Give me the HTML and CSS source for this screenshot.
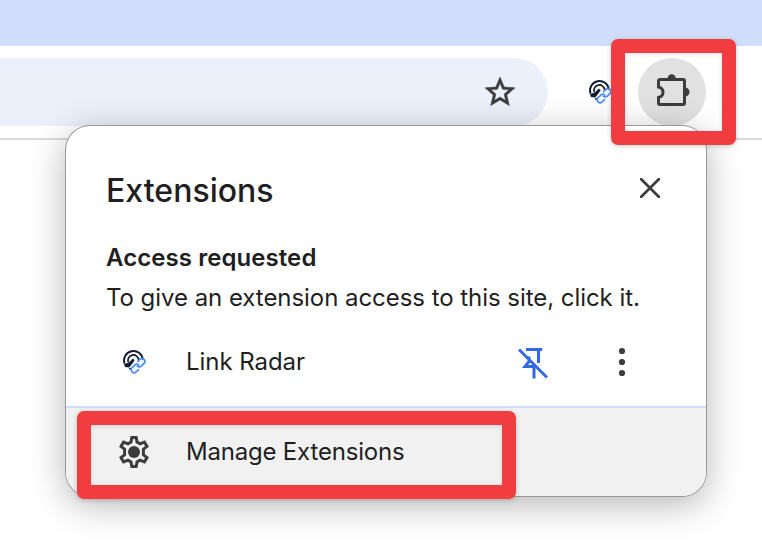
FILE: index.html
```
<!DOCTYPE html>
<html lang="en">
<head>
<meta charset="utf-8">
<title>Extensions</title>
<link rel="stylesheet" href="styles.css">
</head>
<body>
<svg class="defs" aria-hidden="true">
  <symbol id="radar" viewBox="0 0 28 28">
    <g fill="none" stroke="#111a2e">
      <path d="M4.600 16.600A9.400 9.400 0 1 1 22.800 12.600" stroke-width="1.900"/>
      <path d="M8.300 15A5.300 5.300 0 1 1 18.600 13" stroke-width="1.700"/>
    </g>
    <path d="M4 17.200L9 15.200l4-3.600 1.700 1.600-4.200 5.800-1.500 1.400-4-.5z" fill="#111a2e"/>
    <circle cx="10" cy="21.800" r="1" fill="#111a2e"/>
    <g transform="rotate(-45 18 18.500)" fill="none" stroke="#4b8df8" stroke-width="1.700" stroke-linecap="round">
      <path d="M15.500 21.700H12.300a2.900 2.900 0 0 1 0-5.800H16a2.900 2.900 0 0 1 2.900 2.900"/>
      <path d="M20.500 15.500H23.700a2.900 2.900 0 0 1 0 5.800H20a2.900 2.900 0 0 1-2.900-2.900"/>
    </g>
  </symbol>
</svg>
<div class="tabstrip"></div>
<header class="toolbar">
  <div class="omnibox">
    <svg class="star" viewBox="0 0 24 24"><path d="M22 9.24l-7.19-.62L12 2 9.19 8.63 2 9.24l5.46 4.73L5.82 21 12 17.27 18.18 21l-1.63-7.03L22 9.24zM12 15.4l-3.76 2.27 1-4.28-3.32-2.88 4.38-.38L12 6.1l1.71 4.04 4.38.38-3.32 2.88 1 4.28L12 15.4z"/></svg>
  </div>
  <svg class="radar"><use href="#radar"/></svg>
  <div class="puzzle">
    <svg viewBox="0 0 40 40"><path d="M7.500 9.500H30Q31.500 9.500 31.500 11V33Q31.500 34.500 30 34.500H7Q5.500 34.500 5.500 33V27.500C11.500 26 11.500 18.500 5.500 17V11Q5.500 9.500 7.500 9.500Z" fill="none" stroke="#3c3c3c" stroke-width="3"/><path d="M14.500 9a4.200 4.800 0 0 1 8.400 0zM32 17.500a4.500 4.500 0 0 1 0 9z" fill="#3c3c3c"/></svg>
  </div>
</header>
<main class="popup">
  <div class="title-row">
    <h1>Extensions</h1>
    <svg class="close" viewBox="0 0 20 20"><path d="M1 1l18 18M19 1L1 19"/></svg>
  </div>
  <h2>Access requested</h2>
  <p>To give an extension access to this site, click it.</p>
  <div class="item">
    <svg class="radar"><use href="#radar"/></svg>
    <span class="name">Link Radar</span>
    <svg class="pin" viewBox="0 0 32 32"><path d="M10 2.500H26M22.500 2.500V16M13 9.500V14.500L9 19.500H20M18 20V31.500M3 2.500L31 30.500"/></svg>
    <svg class="dots" viewBox="0 0 8 30"><circle cx="4" cy="4" r="3.100"/><circle cx="4" cy="15" r="3.100"/><circle cx="4" cy="26" r="3.100"/></svg>
  </div>
  <footer class="manage">
    <svg class="gear" viewBox="0 0 34 34"><path d="M14.800 2.500h4.400l.8 4.600 3 1.700 4.400-1.700 2.600 4.200-3.600 2.900v5.600l3.600 2.900-2.600 4.200-4.400-1.700-3 1.700-.8 4.600h-4.400l-.8-4.600-3-1.700-4.400 1.700-2.600-4.200 3.600-2.900v-5.600l-3.600-2.900 2.600-4.200 4.400 1.700 3-1.700z"/><circle cx="17" cy="17" r="6"/></svg>
    <span>Manage Extensions</span>
  </footer>
</main>
<div class="mark mark-puzzle"></div>
<div class="mark mark-manage"></div>
</body>
</html>
```
FILE: styles.css
```
* { box-sizing: border-box; }
body {
  margin: 0;
  height: 550px;
  overflow: hidden;
  position: relative;
  background: #fff;
  color: #1f1f1f;
  font-family: Inter, "Liberation Sans", sans-serif;
}
svg { display: block; flex: none; }
.defs { position: absolute; width: 0; height: 0; }
.tabstrip { height: 46px; background: #d0defb; }
.toolbar {
  height: 94px;
  display: flex;
  align-items: flex-start;
  padding-top: 12px;
  border-bottom: 2px solid #dcdcdc;
}
.omnibox {
  width: 548px;
  height: 68px;
  border-radius: 0 34px 34px 0;
  background: #ebf0fa;
  display: flex;
  justify-content: flex-end;
  padding: 16px 30px 0 0;
}
.star { width: 36px; height: 36px; fill: #3c3c3c; stroke: #3c3c3c; stroke-width: .35; }
.radar { width: 28px; height: 28px; }
.toolbar .radar { margin: 19px 0 0 38px; }
.puzzle {
  width: 68px;
  height: 68px;
  margin-left: 24px;
  padding: 12px 0 0 15px;
  border-radius: 50%;
  background: #e1e1e1;
}
.puzzle svg { width: 40px; height: 40px; }
.popup {
  position: absolute;
  left: 66px;
  top: 126px;
  width: 640px;
  height: 370px;
  border-radius: 24px;
  background: #fff;
  box-shadow: 0 0 0 1px #999, 0 8px 36px rgba(0, 0, 0, .3);
  overflow: hidden;
  display: flex;
  flex-direction: column;
}
.title-row {
  height: 112px;
  padding: 45px 46px 0 40px;
  display: flex;
  justify-content: space-between;
}
h1 { margin: 0; font-size: 32px; line-height: 40px; font-weight: 550; letter-spacing: .02px; }
.close { width: 20px; height: 20px; margin-top: 7px; stroke: #3c3c3c; stroke-width: 2.7; stroke-linecap: round; }
h2 { margin: 0 0 0 40px; font-size: 24px; line-height: 40px; font-weight: 600; letter-spacing: .07px; }
p { margin: 0 0 0 40px; font-size: 24px; line-height: 40px; letter-spacing: -.05px; white-space: nowrap; }
.item {
  height: 88px;
  display: flex;
  align-items: center;
  padding: 0 80px 0 54px;
}
.item .radar { margin-top: -2px; }
.item .name { margin: -2px 0 0 38px; flex: 1; font-size: 24px; letter-spacing: -.05px; }
.pin { width: 32px; height: 32px; margin: 2px 2px 0 -2px; fill: none; stroke: #3367e3; stroke-width: 3; }
.dots { width: 8px; height: 30px; margin-left: 68px; fill: #3c3c3c; }
.manage {
  flex: 1;
  border-top: 2px solid #d0defb;
  background: #f1f1f1;
  display: flex;
  align-items: center;
  padding: 0 0 0 51px;
  font-size: 24px;
  letter-spacing: -.2px;
}
.manage span { margin-top: -2px; }
.gear { width: 34px; height: 34px; margin-right: 35px; }
.gear path { fill: none; stroke: #3c3c3c; stroke-width: 3; }
.gear circle { fill: #3c3c3c; }
.mark {
  position: absolute;
  border: 14px solid #f13d40;
  border-radius: 7px;
  box-shadow: 0 1px 5px rgba(0, 0, 0, .2), inset 0 1px 5px rgba(0, 0, 0, .12);
}
.mark-puzzle { left: 611px; top: 39px; width: 125px; height: 106px; }
.mark-manage { left: 77px; top: 411px; width: 439px; height: 88px; }
```
